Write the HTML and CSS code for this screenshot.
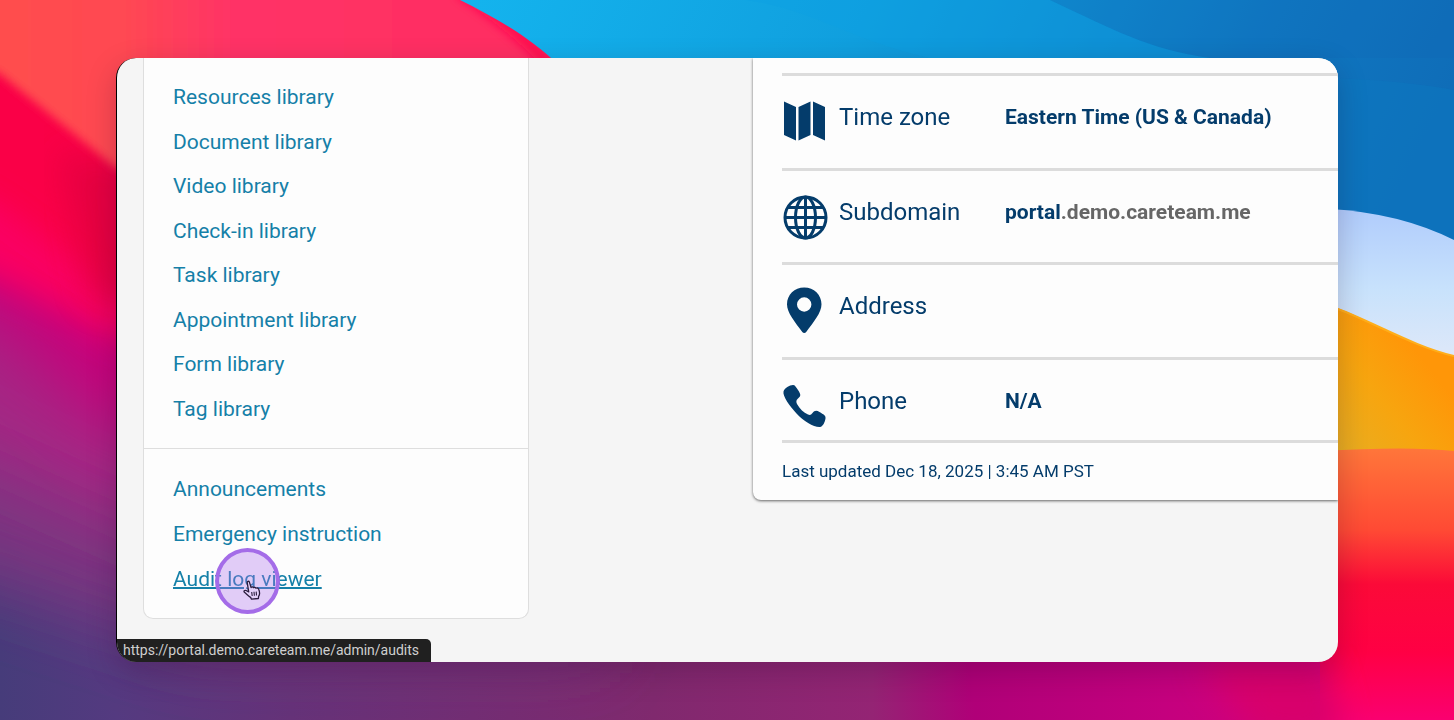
FILE: index.html
```html
<!DOCTYPE html>
<html lang="en">
<head>
    <meta charset="UTF-8">
    <meta name="viewport" content="width=device-width, initial-scale=1.0">
    <title>Admin - Careteam</title>
    <link rel="stylesheet" href="styles.css">
</head>
<body>
    <svg class="wallpaper" viewBox="0 0 1454 720" preserveAspectRatio="none" aria-hidden="true">
        <defs>
            <linearGradient id="base" x1="0" y1="0" x2="1" y2="0">
                <stop offset="0" stop-color="#463c7a"/>
                <stop offset="0.08" stop-color="#543a80"/>
                <stop offset="0.2" stop-color="#643378"/>
                <stop offset="0.45" stop-color="#80296e"/>
                <stop offset="0.6" stop-color="#942474"/>
                <stop offset="0.67" stop-color="#b00078"/>
                <stop offset="0.8" stop-color="#c4007e"/>
                <stop offset="1" stop-color="#e6007c"/>
            </linearGradient>
            <linearGradient id="pink" x1="0" y1="0" x2="1" y2="0">
                <stop offset="0" stop-color="#ff504c"/>
                <stop offset="0.24" stop-color="#ff4852"/>
                <stop offset="0.4" stop-color="#ff3366"/>
                <stop offset="1" stop-color="#ff2a60"/>
            </linearGradient>
            <linearGradient id="blue" x1="0" y1="0" x2="1" y2="0.2">
                <stop offset="0" stop-color="#14b4ee"/>
                <stop offset="0.4" stop-color="#109fde"/>
                <stop offset="0.8" stop-color="#0f78c2"/>
                <stop offset="1" stop-color="#0f6db8"/>
            </linearGradient>
            <linearGradient id="sky" x1="0" y1="0" x2="0" y2="1">
                <stop offset="0" stop-color="#b0ccfc"/>
                <stop offset="0.5" stop-color="#c8e2fc"/>
                <stop offset="1" stop-color="#e2e9f8"/>
            </linearGradient>
            <linearGradient id="gold" x1="1" y1="0" x2="0" y2="1">
                <stop offset="0.3" stop-color="#ff9608"/>
                <stop offset="0.6" stop-color="#f7a50f"/>
                <stop offset="1" stop-color="#e5af25"/>
            </linearGradient>
            <linearGradient id="red" x1="0" y1="0" x2="0" y2="1">
                <stop offset="0" stop-color="#ff763a"/>
                <stop offset="0.3" stop-color="#ff4a34"/>
                <stop offset="0.5" stop-color="#fb0a38"/>
                <stop offset="0.75" stop-color="#ff0044"/>
                <stop offset="1" stop-color="#fa0070"/>
            </linearGradient>
            <filter id="soft" x="-20%" y="-20%" width="140%" height="140%">
                <feGaussianBlur stdDeviation="16"/>
            </filter>
            <filter id="softer" x="-30%" y="-30%" width="160%" height="160%">
                <feGaussianBlur stdDeviation="34"/>
            </filter>
            <filter id="edge" x="-20%" y="-20%" width="140%" height="140%">
                <feGaussianBlur stdDeviation="5"/>
            </filter>
        </defs>
        <rect width="1454" height="720" fill="url(#base)"/>
        <path d="M-200 -60 H600 V650 H200 L-200 520Z" fill="#7c3480" filter="url(#softer)"/>
        <path d="M-200 -60 H600 V540 H160 L-200 380Z" fill="#a42884" filter="url(#softer)"/>
        <path d="M-200 -60 H600 V450 L116 430 L0 325 L-200 240Z" fill="#c8007a" filter="url(#softer)"/>
        <path d="M-200 -60 H600 V370 L116 338 L0 280 L-200 200Z" fill="#fa0062" filter="url(#soft)"/>
        <path d="M-200 -60 H600 V310 L116 290 L0 205 L-200 100Z" fill="#fa0046" filter="url(#soft)"/>
        <path d="M60 150 L140 170 V310 L90 300Z" fill="#d8003c" opacity="0.6" filter="url(#soft)"/>
        <path d="M-40 -40 H640 V220 L116 168 L0 74 L-40 54Z" fill="url(#pink)" filter="url(#edge)"/>
        <path d="M460 -10 Q515 25 555 70" fill="none" stroke="#ff0850" stroke-width="14" filter="url(#edge)"/>
        <path d="M460 0 C500 20 530 38 560 66 V400 H1454 V0Z" fill="url(#blue)"/>
        <path d="M745 0 C810 8 850 40 930 58 H1210 C1150 50 1110 28 1050 0Z" fill="#0c9fe4" opacity="0.4"/>
        <path d="M1050 0 C1110 28 1150 50 1210 58 H1454 V0Z" fill="#0f66b4" opacity="0.2"/>
        <path d="M1330 78 Q1400 80 1454 90 V240 H1330Z" fill="#0c78c0" opacity="0.5"/>
        <path d="M1330 209 Q1400 213 1454 240 V370 H1330Z" fill="url(#sky)"/>
        <path d="M1330 305 C1370 320 1410 345 1454 356 V460 H1330Z" fill="url(#gold)"/>
        <path d="M1338 309 C1375 323 1415 347 1454 356" fill="none" stroke="#ffae1a" stroke-width="2"/>
        <path d="M1320 451 Q1410 446 1454 451 V720 H1320Z" fill="url(#red)"/>
        <path d="M1200 660 H1325 L1345 740 H1260Z" fill="#d8006c" filter="url(#soft)"/>
    </svg>

    <main class="window">
        <nav class="sidebar" aria-label="Administration">
            <ul class="menu menu-libraries">
                <li><a href="#resources">Resources library</a></li>
                <li><a href="#documents">Document library</a></li>
                <li><a href="#videos">Video library</a></li>
                <li><a href="#check-ins">Check-in library</a></li>
                <li><a href="#tasks">Task library</a></li>
                <li><a href="#appointments">Appointment library</a></li>
                <li><a href="#forms">Form library</a></li>
                <li><a href="#tags">Tag library</a></li>
            </ul>
            <ul class="menu menu-tools">
                <li><a href="#announcements">Announcements</a></li>
                <li><a href="#emergency">Emergency instruction</a></li>
                <li class="hovered">
                    <a href="#audits">Audit log viewer</a>
                    <span class="click-ring" aria-hidden="true"></span>
                    <svg class="pointer" viewBox="0 0 18 20" aria-hidden="true">
                        <path d="M4.200 2.500C4 1.200 5.900 .7 6.400 2.100L8.100 7.600C8.600 6.500 10.200 6.700 10.500 7.700C11.200 6.900 12.600 7.200 12.900 8.200C14 7.500 15.400 8.100 15.800 9.400C16.800 12 17 14.500 15.600 16.400L15.400 18.500L8.500 19.200L7.600 17.400C5.600 16.300 3.800 14.300 1.400 12.300C.4 11.200 1.700 9.900 3.100 10.500L5.700 11.900Z" fill="#e3d0f8" stroke="#2b1c3d" stroke-width="1.300" stroke-linejoin="round"/>
                        <path d="M8.700 12L9.200 16M11 11.800L11.400 15.800M13.200 11.600L13.500 15.500" fill="none" stroke="#2b1c3d" stroke-width="1.100"/>
                    </svg>
                </li>
            </ul>
        </nav>

        <section class="card">
            <dl class="details">
                <div class="row">
                    <dt>
                        <svg class="icon" viewBox="0 0 48 48" aria-hidden="true">
                            <path d="M2 4.500L14 10V43.500L2 38ZM16.500 10L28.500 4.500V38L16.500 43.500ZM31 4.500L43 10V43.500L31 38Z"/>
                        </svg>
                        Time zone
                    </dt>
                    <dd>Eastern Time (US &amp; Canada)</dd>
                </div>
                <div class="row">
                    <dt>
                        <svg class="icon icon-line" viewBox="0 0 48 48" aria-hidden="true">
                            <circle cx="23.500" cy="25.500" r="20.500"/>
                            <ellipse cx="23.500" cy="25.500" rx="10" ry="20.500"/>
                            <path d="M23.500 5V46M3 25.500H44M6 15.500H41M6 35.500H41"/>
                        </svg>
                        Subdomain
                    </dt>
                    <dd>portal<span class="muted">.demo.careteam.me</span></dd>
                </div>
                <div class="row">
                    <dt>
                        <svg class="icon" viewBox="0 0 48 48" aria-hidden="true">
                            <path fill-rule="evenodd" d="M22.200 1.500C12.500 1.500 5 8.800 5 18.300C5 27 13 36 20.300 46C21.300 47.400 23.200 47.400 24.200 46C31.500 36 39.500 27 39.500 18.300C39.500 8.800 32 1.500 22.200 1.500ZM22.200 11.300A7.200 7.200 0 1 1 22.200 25.700A7.200 7.200 0 1 1 22.200 11.300Z"/>
                        </svg>
                        Address
                    </dt>
                    <dd></dd>
                </div>
                <div class="row">
                    <dt>
                        <svg class="icon" viewBox="0 0 48 48" aria-hidden="true">
                            <path d="M1.500 10.500C2.500 7 7.500 4 11 4C13 4 14 6 16 9C19 13.500 19 15 16 17.500C14 19 14 21 15 23C18 28 21.500 31.500 26 33.500C28 34.300 29 34 30.500 32C32.500 29.300 34.500 29 37.500 31C41.500 33.500 44 34.500 43.500 37.500C43 41 41 45.500 38 46C32 46.500 21.500 40 14.500 32.500C7.500 25 .5 15 1.500 10.500Z"/>
                        </svg>
                        Phone
                    </dt>
                    <dd>N/A</dd>
                </div>
            </dl>
            <p class="updated">Last updated Dec 18, 2025 | 3:45 AM PST</p>
        </section>

        <div class="status-bar">https://portal.demo.careteam.me/admin/audits</div>
    </main>
</body>
</html>
```
FILE: styles.css
```css
* {
    box-sizing: border-box;
}
body {
    min-height: 100vh;
    margin: 0;
    padding: 58px 116px;
    display: flex;
    font-family: Roboto, Arial, sans-serif;
    color: #043c6b;
}
ul, dl, dd, p {
    margin: 0;
    padding: 0;
}
.wallpaper {
    position: fixed;
    inset: 0;
    z-index: -1;
    width: 100%;
    height: 100%;
}
.window {
    position: relative;
    flex: 1;
    min-width: 0;
    display: grid;
    grid-template-columns: 386px minmax(400px, 1fr);
    column-gap: 224px;
    align-items: start;
    padding-left: 26px;
    overflow: hidden;
    background: #f5f5f5;
    border-left: 1px solid #000;
    border-radius: 20px;
    box-shadow: 0 10px 30px rgba(30, 0, 40, 0.22);
}

/* sidebar */
.sidebar {
    background: #fdfdfd;
    border: 1px solid #dedede;
    border-top: none;
    border-radius: 0 0 10px 10px;
}
.menu {
    display: grid;
    grid-auto-rows: 1fr;
    padding: 17px 29px;
    list-style: none;
    font-size: 21px;
}
.menu li {
    display: flex;
    align-items: center;
}
.menu a {
    color: #1580a8;
    text-decoration: none;
}
.menu-libraries {
    min-height: 391px;
    border-bottom: 1px solid #dedede;
}
.menu-tools {
    min-height: 169px;
}
.menu .hovered {
    position: relative;
}
.menu .hovered a {
    text-decoration: underline;
    text-decoration-thickness: 2px;
}
.click-ring {
    position: absolute;
    left: 42px;
    top: -8px;
    width: 65px;
    height: 66px;
    border: 4px solid #a46ce8;
    border-radius: 50%;
    background: rgba(171, 112, 236, 0.35);
}
.pointer {
    position: absolute;
    left: 70px;
    top: 24px;
    width: 18px;
    height: 20px;
}

/* organisation details */
.card {
    padding: 15px 0 0 29px;
    background: #fdfdfd;
    border-radius: 0 0 0 8px;
    box-shadow: 0 1px 3px rgba(0, 0, 0, 0.6);
}
.details {
    display: grid;
    grid-template-rows: repeat(3, 1fr) 83px;
    min-height: 370px;
    border-top: 3px solid #dcdcdc;
}
.row {
    display: grid;
    grid-template-columns: 223px 1fr;
    align-items: start;
    padding-top: 21px;
    border-bottom: 3px solid #dcdcdc;
    font-size: 24px;
}
.row dt {
    display: flex;
    gap: 9px;
    line-height: 40px;
}
.row dd {
    font-size: 21px;
    font-weight: 700;
    line-height: 40px;
}
.icon {
    width: 48px;
    height: 48px;
    fill: #043c6b;
}
.icon-line {
    fill: none;
    stroke: #043c6b;
    stroke-width: 3;
}
.muted {
    color: #666;
}
.updated {
    padding: 18px 0;
    font-size: 17px;
    line-height: 21px;
}

/* link preview in the corner of the browser */
.status-bar {
    position: absolute;
    left: 0;
    bottom: 0;
    padding: 0 12px 0 6px;
    background: #202020;
    border-radius: 0 5px 0 0;
    color: #cfcfcf;
    font-size: 14px;
    line-height: 23px;
}
```
